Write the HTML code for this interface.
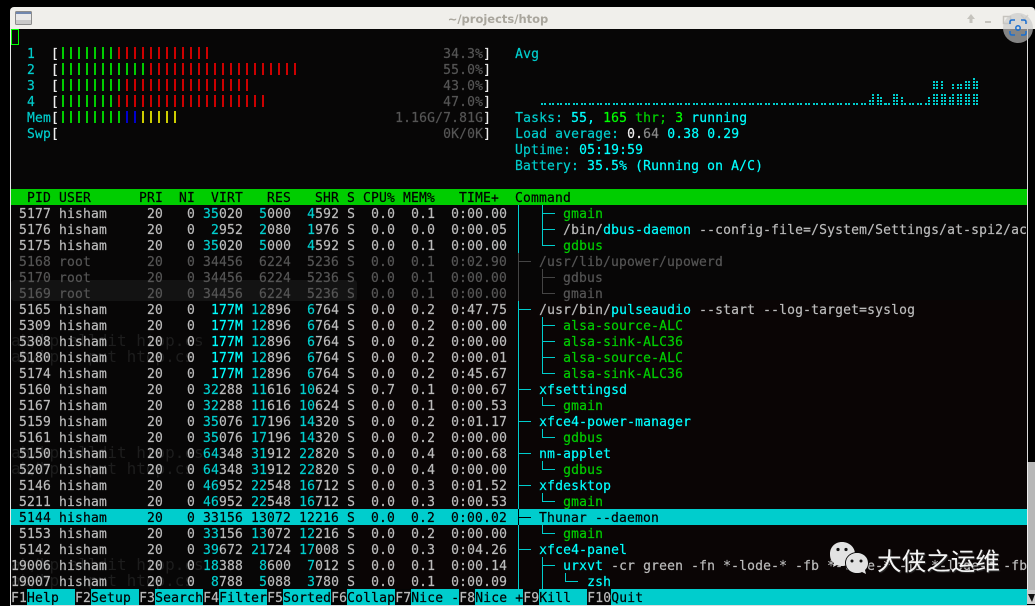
<!DOCTYPE html>
<html><head><meta charset="utf-8"><title>htop</title>
<style>
html,body{margin:0;padding:0;background:#000;width:1035px;height:606px;overflow:hidden}
#w{position:absolute;left:0;top:0;width:1035px;height:606px;overflow:hidden;background:#000}
#tb{position:absolute;left:10px;top:7px;width:1025px;height:22px;background:#f0efeb;border-radius:4px 4px 0 0}
#term{position:absolute;left:11px;top:29px;width:1016px;height:576px;background:#070606}
.a{position:absolute}
#t,#f{position:absolute;left:11px;font:13px/16px "DejaVu Sans Mono","Liberation Mono",monospace;letter-spacing:.174px;color:#bbb;-webkit-text-stroke:.2px}
#t{top:31px;width:1016px;height:558px;overflow:hidden;white-space:normal}
#t div{height:16px;white-space:pre;overflow:hidden}
#f{white-space:pre}
#t i,#t b,#t s,#t em,#t u,#t q,#t var{font-style:normal;font-weight:normal;text-decoration:none;quotes:none}
#t q:before,#t q:after{content:none}
i{color:#00cdcd}b{color:#0ff}s{color:#00cd00}em{color:#0f0}u{color:#555}q{color:#eee}var{color:#888}
#t .d{color:#555}#t .sel{color:#000}#t .hd{color:#000}
#f{top:589px;width:1016px;height:16px;background:#00cdcd;color:#000;overflow:hidden}
#f span{display:inline-block;height:16px;line-height:20px;vertical-align:top}
#f .k{background:#050505;color:#bbb}
.bar{position:absolute;left:62px;height:12px}
.gh{position:absolute;font:16px/16px "DejaVu Sans Mono",monospace;color:#1d1d1d;white-space:pre;left:11px}
</style></head><body><div id="w">
<div id="tb"></div>
<svg class="a" style="left:15px;top:11px" width="18" height="15" viewBox="0 0 18 15"><rect x=".5" y=".5" width="16" height="13" rx="1" fill="#e8e8e8" stroke="#8c8c8c"/><rect x="1" y="1" width="15" height="2" fill="#6f86ae"/><rect x="1" y="9" width="15" height="4" fill="#c9c9c9"/></svg>
<div class="a" style="left:400px;top:12px;width:196px;text-align:center;font:bold 11.500px/15px 'DejaVu Sans',sans-serif;color:#a9a69d">~/projects/htop</div>
<svg class="a" style="left:960px;top:10px" width="75" height="20" viewBox="0 0 75 20"><path d="M11 4L7 9h2.500v4h3V9H15z" fill="#c5c3bd"/><rect x="25" y="11" width="6" height="2" fill="#c5c3bd"/><rect x="43.500" y="6.500" width="7" height="7" fill="none" stroke="#c5c3bd" stroke-width="1.500"/><path d="M61 5l7 8M68 5l-7 8" stroke="#d5d3cd" stroke-width="1.500"/></svg>
<div id="term"></div>
<div class="a" style="left:11px;top:280px;width:346px;height:21px;background:#131313;border-radius:3px"></div>
<div class="a" style="left:360px;top:300px;width:667px;height:290px;background:#0a0505"></div>
<div class="a" style="left:10px;top:29px;width:1px;height:577px;background:#e8e8e8"></div>
<div class="a" style="left:1027px;top:29px;width:1px;height:433px;background:#ddd"></div>
<div class="a" style="left:1027px;top:462px;width:8px;height:128px;background:#b7b7b7;border-left:1px solid #eee;box-sizing:border-box"></div>
<div class="a" style="left:1027px;top:590px;width:8px;height:14px;background:#ccc"></div>
<svg class="a" style="left:1027px;top:590px" width="8" height="14"><path d="M1 4h7l-3 8z" fill="#111"/></svg>
<div class="a" style="left:10px;top:605px;width:1025px;height:1px;background:#ddd"></div>
<div class="gh" style="top:333px">ab/hp.alldit htop.cs</div>
<div class="gh" style="top:349px">ab/hp.  put htop.cs</div>
<div class="gh" style="top:445px">ab/hp.alldit htop.cs</div>
<div class="gh" style="top:461px">ab/hp.  put htop.cs</div>
<div class="gh" style="top:557px">ab/hp.alldit htop.cs</div>
<div class="gh" style="top:573px">ab/hp.  put htop.cs</div>
<div class="a" style="left:11px;top:29px;width:8px;height:16px;box-sizing:border-box;border:1px solid #0f0"></div>
<div class="a" style="left:11px;top:189px;width:1016px;height:16px;background:#00cd00"></div>
<div class="a" style="left:11px;top:509px;width:1016px;height:16px;background:#00cdcd"></div>

<div class="bar" style="top:47px;width:56px;background:repeating-linear-gradient(90deg,#00cd00 0 2px,transparent 2px 8px)"></div>
<div class="bar" style="top:47px;left:118px;width:96px;background:repeating-linear-gradient(90deg,#cd0000 0 2px,transparent 2px 8px)"></div>
<div class="bar" style="top:63px;width:88px;background:repeating-linear-gradient(90deg,#00cd00 0 2px,transparent 2px 8px)"></div>
<div class="bar" style="top:63px;left:150px;width:152px;background:repeating-linear-gradient(90deg,#cd0000 0 2px,transparent 2px 8px)"></div>
<div class="bar" style="top:79px;width:64px;background:repeating-linear-gradient(90deg,#00cd00 0 2px,transparent 2px 8px)"></div>
<div class="bar" style="top:79px;left:126px;width:128px;background:repeating-linear-gradient(90deg,#cd0000 0 2px,transparent 2px 8px)"></div>
<div class="bar" style="top:95px;width:56px;background:repeating-linear-gradient(90deg,#00cd00 0 2px,transparent 2px 8px)"></div>
<div class="bar" style="top:95px;left:118px;width:152px;background:repeating-linear-gradient(90deg,#cd0000 0 2px,transparent 2px 8px)"></div>
<div class="bar" style="top:111px;width:64px;background:repeating-linear-gradient(90deg,#00cd00 0 2px,transparent 2px 8px)"></div>
<div class="bar" style="top:111px;left:126px;width:16px;background:repeating-linear-gradient(90deg,#0000cd 0 2px,transparent 2px 8px)"></div>
<div class="bar" style="top:111px;left:142px;width:40px;background:repeating-linear-gradient(90deg,#cdcd00 0 2px,transparent 2px 8px)"></div>

<svg class="a" style="left:0;top:0" width="1035" height="606" shape-rendering="crispEdges">
<defs><pattern id="dp" x="541" y="103" width="8" height="2" patternUnits="userSpaceOnUse"><rect width="2" height="2" fill="#00cdcd"/><rect x="3" width="2" height="2" fill="#00cdcd"/></pattern></defs>
<rect x="541" y="103" width="438" height="2" fill="url(#dp)"/>
<path fill="none" stroke="#00cdcd" stroke-width="2" stroke-dasharray="2 1" d="M870 105V100M873 105V94M878 105V94M881 105V97M885 105V103M894 105V94M897 105V94M902 105V97M929 105V97
M934 105V94M934 89V81M937 105V94M937 89V81M942 105V94M942 89V81M945 105V94M950 105V97M953 105V94M953 89V84M958 105V94M958 89V84M961 105V94M961 89V84M966 105V94M966 89V81M969 105V94M969 89V81M974 105V94M974 89V78M977 105V94M977 89V81"/>
<path fill="none" stroke="#00cdcd" d="M518.500 205V253M518.500 301V509M518.500 525V589
M518 309.500H531M518 389.500H531M518 421.500H531M518 453.500H531M518 485.500H531M518 549.500H531
M542.500 205V245.500M542 213.500H555M542 229.500H555M542 245.500H555
M542.500 317V373.500M542 325.500H555M542 341.500H555M542 357.500H555M542 373.500H555
M542.500 397V405.500M542 405.500H555M542.500 429V437.500M542 437.500H555M542.500 461V469.500M542 469.500H555M542.500 493V501.500M542 501.500H555M542.500 525V533.500M542 533.500H555
M542.500 557V589M542 565.500H555M565.500 573V581.500M565 581.500H578"/>
<path fill="none" stroke="#444" d="M518.500 253V301M518 261.500H531M542.500 269V293.500M542 277.500H555M542 293.500H555"/>
<path fill="none" stroke="#000" d="M518.500 509V525M518 517.500H531"/>
</svg>

<div id="t"><div> </div>
<div>  <i>1</i>  <q>[</q>                                                <u>34.3%</u><q>]</q>   <i>Avg</i></div>
<div>  <i>2</i>  <q>[</q>                                                <u>55.0%</u><q>]</q></div>
<div>  <i>3</i>  <q>[</q>                                                <u>43.0%</u><q>]</q></div>
<div>  <i>4</i>  <q>[</q>                                                <u>47.0%</u><q>]</q></div>
<div>  <i>Mem</i><q>[</q>                                          <u>1.16G/7.81G</u><q>]</q>   <i>Tasks: </i><b>55, </b><em>165</em><s> thr; </s><em>3</em><b> running</b></div>
<div>  <i>Swp</i><q>[</q>                                                <u>0K/0K</u><q>]</q>   <i>Load average: </i><q>0.</q><var>64</var> <b>0.38 0.29</b></div>
<div>                                                               <i>Uptime: </i><b>05:19:59</b></div>
<div>                                                               <i>Battery: </i><b>35.5% (Running on A/C)</b></div>
<div> </div>
<div class="hd">  PID USER      PRI  NI  VIRT   RES   SHR S CPU% MEM%   TIME+  Command</div>
<div> 5177 hisham     20   0 <i>35</i>020  <i>5</i>000  <i>4</i>592 S  0.0  0.1  0:00.00       <s>gmain</s></div>
<div> 5176 hisham     20   0  <i>2</i>952  <i>2</i>080  <i>1</i>976 S  0.0  0.0  0:00.05       /bin/<b>dbus-daemon</b> --config-file=/System/Settings/at-spi2/ac</div>
<div> 5175 hisham     20   0 <i>35</i>020  <i>5</i>000  <i>4</i>592 S  0.0  0.1  0:00.00       <s>gdbus</s></div>
<div class="d"> 5168 root       20   0 34456  6224  5236 S  0.0  0.1  0:02.90    /usr/lib/upower/upowerd</div>
<div class="d"> 5170 root       20   0 34456  6224  5236 S  0.0  0.1  0:00.00       gdbus</div>
<div class="d"> 5169 root       20   0 34456  6224  5236 S  0.0  0.1  0:00.00       gmain</div>
<div> 5165 hisham     20   0  <b>177M</b> <i>12</i>896  <i>6</i>764 S  0.0  0.2  0:47.75    /usr/bin/<b>pulseaudio</b> --start --log-target=syslog</div>
<div> 5309 hisham     20   0  <b>177M</b> <i>12</i>896  <i>6</i>764 S  0.0  0.2  0:00.00       <s>alsa-source-ALC</s></div>
<div> 5308 hisham     20   0  <b>177M</b> <i>12</i>896  <i>6</i>764 S  0.0  0.2  0:00.00       <s>alsa-sink-ALC36</s></div>
<div> 5180 hisham     20   0  <b>177M</b> <i>12</i>896  <i>6</i>764 S  0.0  0.2  0:00.01       <s>alsa-source-ALC</s></div>
<div> 5174 hisham     20   0  <b>177M</b> <i>12</i>896  <i>6</i>764 S  0.0  0.2  0:45.67       <s>alsa-sink-ALC36</s></div>
<div> 5160 hisham     20   0 <i>32</i>288 <i>11</i>616 <i>10</i>624 S  0.7  0.1  0:00.67    <b>xfsettingsd</b></div>
<div> 5167 hisham     20   0 <i>32</i>288 <i>11</i>616 <i>10</i>624 S  0.0  0.1  0:00.53       <s>gmain</s></div>
<div> 5159 hisham     20   0 <i>35</i>076 <i>17</i>196 <i>14</i>320 S  0.0  0.2  0:01.17    <b>xfce4-power-manager</b></div>
<div> 5161 hisham     20   0 <i>35</i>076 <i>17</i>196 <i>14</i>320 S  0.0  0.2  0:00.00       <s>gdbus</s></div>
<div> 5150 hisham     20   0 <i>64</i>348 <i>31</i>912 <i>22</i>820 S  0.0  0.4  0:00.68    <b>nm-applet</b></div>
<div> 5207 hisham     20   0 <i>64</i>348 <i>31</i>912 <i>22</i>820 S  0.0  0.4  0:00.00       <s>gdbus</s></div>
<div> 5146 hisham     20   0 <i>46</i>952 <i>22</i>548 <i>16</i>712 S  0.0  0.3  0:01.52    <b>xfdesktop</b></div>
<div> 5211 hisham     20   0 <i>46</i>952 <i>22</i>548 <i>16</i>712 S  0.0  0.3  0:00.53       <s>gmain</s></div>
<div class="sel"> 5144 hisham     20   0 33156 13072 12216 S  0.0  0.2  0:00.02    Thunar --daemon</div>
<div> 5153 hisham     20   0 <i>33</i>156 <i>13</i>072 <i>12</i>216 S  0.0  0.2  0:00.00       <s>gmain</s></div>
<div> 5142 hisham     20   0 <i>39</i>672 <i>21</i>724 <i>17</i>008 S  0.0  0.3  0:04.26    <b>xfce4-panel</b></div>
<div>19006 hisham     20   0 <i>18</i>388  <i>8</i>600  <i>7</i>012 S  0.0  0.1  0:00.14       <b>urxvt</b> -cr green -fn *-lode-* -fb *-lode-* -fi *-lode-* -fb</div>
<div>19007 hisham     20   0  <i>8</i>788  <i>5</i>088  <i>3</i>780 S  0.0  0.1  0:00.09          <b>zsh</b></div>
</div>
<div id="f"><span class="k">F1</span><span>Help  </span><span class="k">F2</span><span>Setup </span><span class="k">F3</span><span>Search</span><span class="k">F4</span><span>Filter</span><span class="k">F5</span><span>Sorted</span><span class="k">F6</span><span>Collap</span><span class="k">F7</span><span>Nice -</span><span class="k">F8</span><span>Nice +</span><span class="k">F9</span><span>Kill  </span><span class="k">F10</span><span>Quit</span></div>

<svg class="a" style="left:826px;top:538px" width="48" height="40" viewBox="826 538 48 40">
<path d="M842 542c7 0 13 5 13 12s-6 12-13 12c-2 0-3 0-5-1l-4 2 1-4c-3-2-4-5-4-9 0-7 5-12 12-12z" fill="#e2e2e2"/>
<circle cx="838" cy="549.500" r="1.600" fill="#111"/><circle cx="846" cy="549.500" r="1.600" fill="#111"/>
<ellipse cx="857" cy="563" rx="12" ry="11" fill="#070606"/>
<path d="M857 553c6 0 11 4 11 10 0 3-1 5-3 7l1 4-4-2c-2 1-3 1-5 1-6 0-11-4-11-10s5-10 11-10z" fill="#e2e2e2"/>
<circle cx="852" cy="561" r="1.500" fill="#111"/><circle cx="861" cy="561" r="1.500" fill="#111"/>
</svg>
<div class="a" style="left:877px;top:545px;font:24.600px/30px 'Noto Sans CJK SC','WenQuanYi Zen Hei',sans-serif;color:#f4f4f4;white-space:nowrap;text-shadow:1px 1px 1px #333">大侠之运维</div>

<div class="a" style="left:1003px;top:13px;width:30px;height:30px;border-radius:50%;background:rgba(200,200,200,.65)"></div>
<svg class="a" style="left:1008px;top:18px" width="20" height="20" viewBox="0 0 20 20" fill="none" stroke="#1a6fd0" stroke-width="1.500"><path d="M2 6V4q0-2 2-2h3M13 2h3q2 0 2 2v2M18 13v2q0 2-2 2h-3M7 17H4q-2 0-2-2v-2"/><circle cx="10" cy="10" r="2.200"/></svg>
</div></body></html>
